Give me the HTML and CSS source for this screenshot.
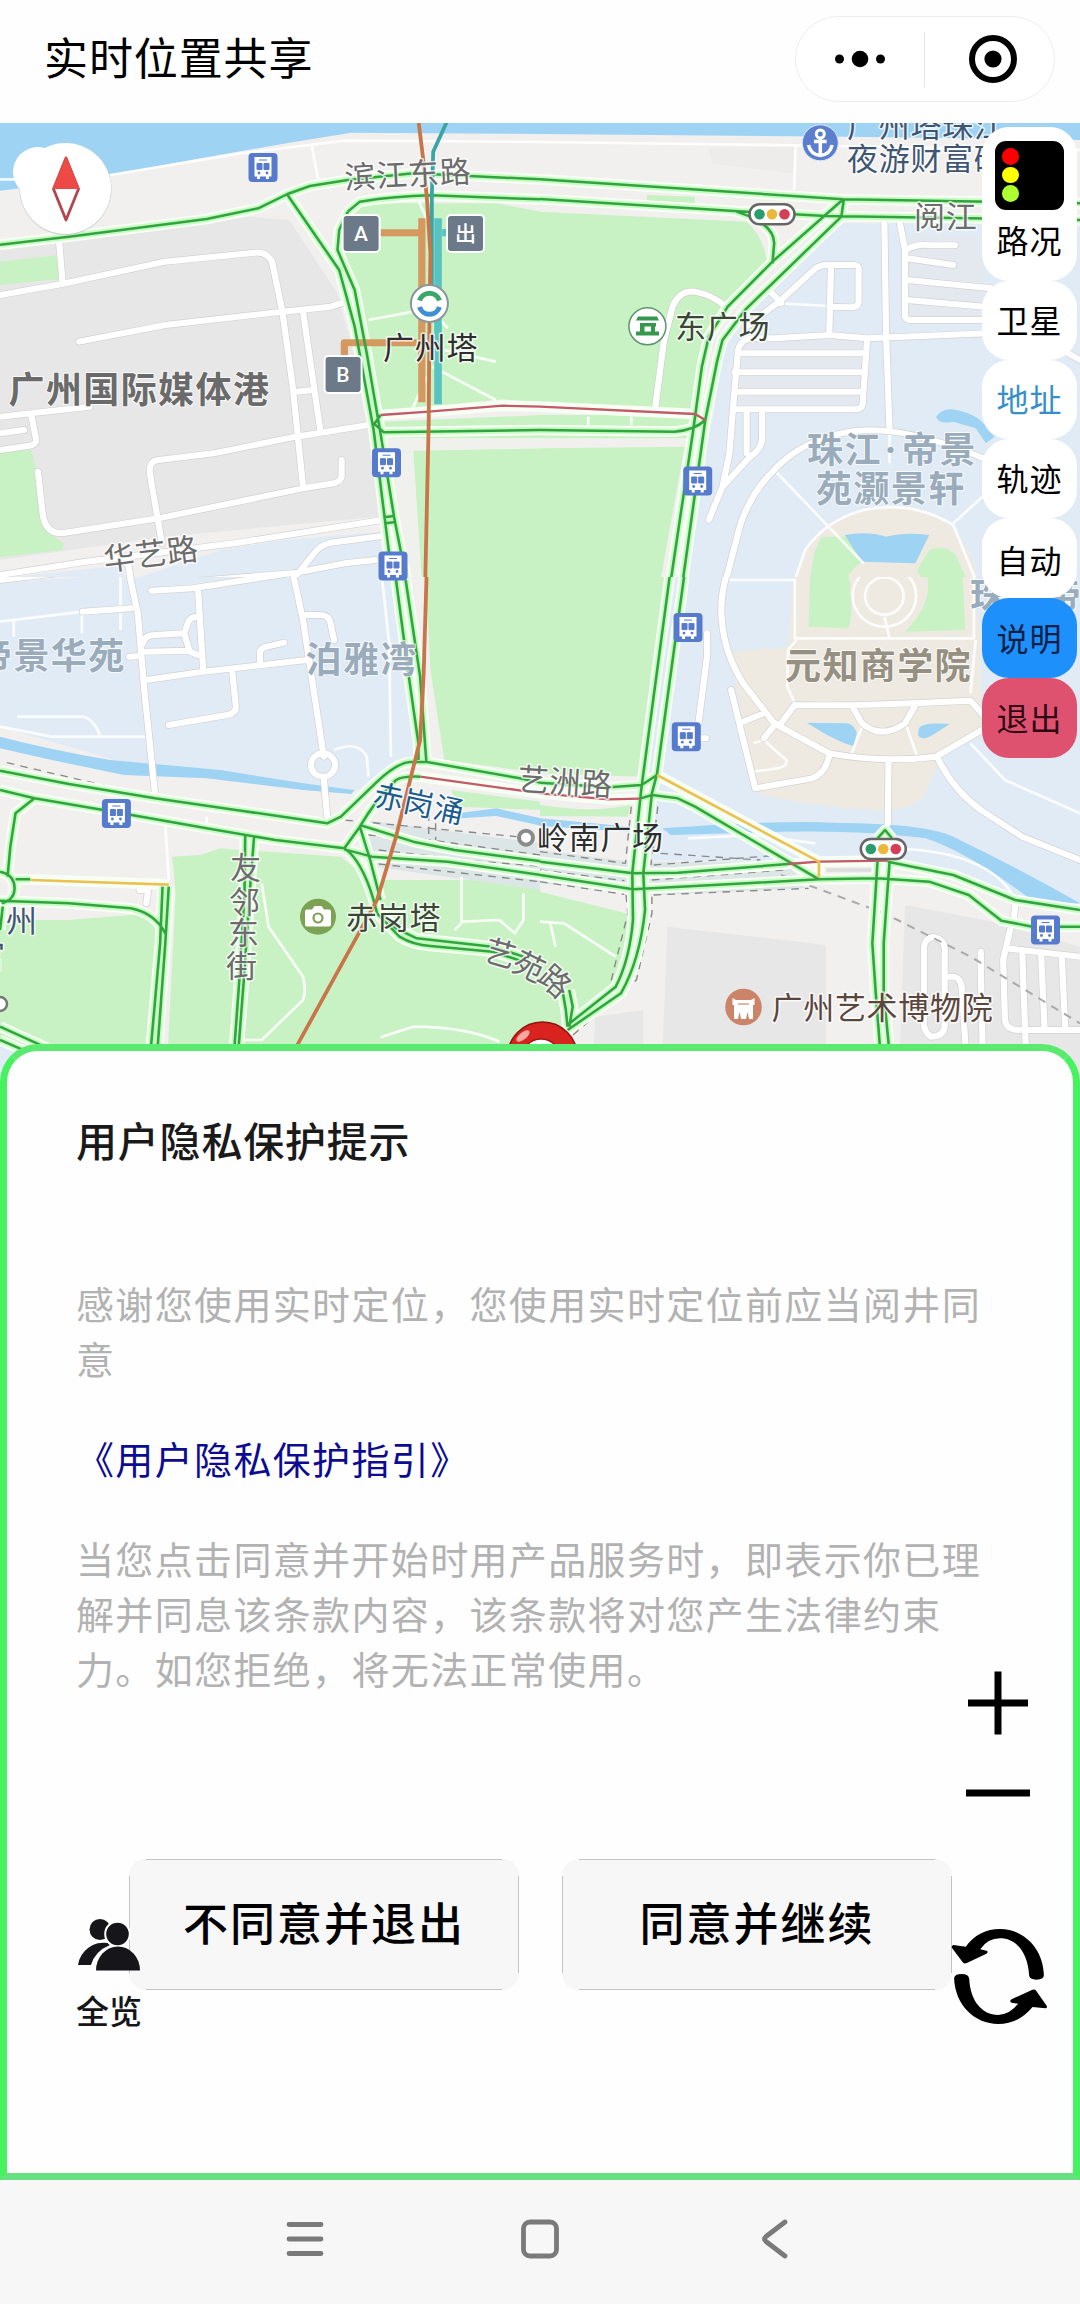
FILE: index.html
```html
<!DOCTYPE html>
<html lang="zh-CN">
<head>
<meta charset="utf-8">
<title>实时位置共享</title>
<link rel="stylesheet" href="styles.css">
</head>
<body>
<div class="phone">
  <header class="topbar">
    <h1 class="topbar-title">实时位置共享</h1>
    <div class="capsule">
      <svg class="capsule-icon" viewBox="0 0 60 60"><circle cx="9.5" cy="30" r="4.5"/><circle cx="30" cy="30" r="8.3"/><circle cx="50.5" cy="30" r="4.5"/></svg>
      <span class="capsule-divider"></span>
      <svg class="capsule-icon" viewBox="0 0 60 60"><circle cx="30" cy="30" r="21" fill="none" stroke="#000" stroke-width="6"/><circle cx="30" cy="30" r="8.6"/></svg>
    </div>
  </header>

  <main class="map">
    <svg class="map-canvas" viewBox="0 123 1080 977" width="1080" height="977">
      <defs>
        <g id="bus">
          <rect x="-14.5" y="-14.5" width="29" height="29" rx="4" fill="#567bcc"/>
          <path d="M-8.500-10.500H8.500V9H6V11.500H3V9H-3V11.500H-6V9H-8.500Z" fill="#fff"/>
          <path d="M-4-7.500H4M-6-4H-1V2H-6ZM1-4H6V2H1Z" fill="#567bcc" stroke="#567bcc" stroke-width="1"/>
          <circle cx="-4" cy="5.500" r="1.400" fill="#567bcc"/><circle cx="4" cy="5.500" r="1.400" fill="#567bcc"/>
        </g>
        <g id="signal">
          <rect x="-22.500" y="-10" width="45" height="20" rx="10" fill="#fff" stroke="#666" stroke-width="2.500"/>
          <circle cx="-12.500" r="5.300" fill="#2a9d6f"/><circle r="5.300" fill="#eab83a"/><circle cx="12.500" r="5.300" fill="#d63d57"/>
        </g>
        <path id="roads-nw" d="M0 525L180 492L480 425L740 398Q775 395 790 425L820 575L850 800L880 1100M172 370L182 490M230 665L480 615L820 575L960 560L1005 545M880 575L930 930M860 815L910 810M0 890L90 880L260 860M90 880L105 960Q105 975 80 978L0 990M0 940L70 930M110 1055L125 1190Q135 1240 180 1240L460 1195L880 1105L970 1090Q995 1082 992 1060V1020M470 1270L435 1060Q432 1022 460 1020L620 1000L860 950L1070 915M0 1365L250 1325L480 1296L680 1270L1110 1200M850 1380L920 1290Q935 1275 960 1268L1110 1248M370 1320L380 1380M480 1390L850 1360L1000 1330L1090 1320"/>
        <path id="roads-ne" d="M1000 310L1005 650L1015 930M1045 310L1060 390V580Q1055 600 1080 600H1300M1060 390Q1100 370 1130 376H1205M1065 415L1200 435M1065 480L1310 505M1065 540L1290 560M665 510L700 550M600 620L700 540L800 445Q815 435 830 435H915Q928 437 925 455V550Q922 562 900 562L840 560M845 440L840 640M620 655H680L840 645L950 655L1300 640M1500 680L1568 720M560 870L575 690Q585 655 620 655M580 700H940M565 757H935M565 815H930M560 868H915Q935 868 937 850L950 655M560 870L550 1000L530 1100L490 1200M600 880V1000M645 880V960Q640 990 610 1010L530 1100M540 1380L580 1220Q610 1120 680 1050Q760 960 900 935Q1050 910 1300 1020M335 860L360 660L385 560Q405 510 450 515Q500 525 540 560"/>
        <path id="roads-sw" d="M0 60L370 15M0 38L300 0M370 15L400 160L420 400L450 700M240 155L380 145M375 290L410 288M440 92L560 85L850 38L880 0M850 38L1000 8L1080 0M850 38L880 180L940 590M940 650L950 770M575 90L590 330M890 165H930Q955 165 960 190L970 240M415 250Q420 225 450 225L535 220L545 190Q550 170 575 170M420 275L545 272L575 285M535 220L550 272M425 360L590 335L890 300M755 310V280Q755 262 775 260L825 248M675 340L685 440Q685 460 660 465L490 495M405 990H430L425 1030M973 615a35 35 0 1 0-70 0a35 35 0 1 0 70 0"/>
        <path id="roads-se" d="M555 0Q520 100 528 180Q535 280 590 370L680 490L840 580Q1000 610 1150 590L1300 500M555 390L625 685L790 655Q830 640 840 585M590 485L650 460M650 535L685 490M740 435Q900 440 1250 422L1300 480M740 435L700 490M910 445L935 490Q990 540 1060 490L1090 435M1012 600L1010 790M1155 595Q1200 690 1280 750L1400 830L1568 900M485 220V290L460 490M470 535H482M1380 1030L1375 1090M1365 1110L1345 1200L1350 1380Q1355 1410 1390 1410H1568M1355 1165L1568 1190M1400 1170L1410 1450M1455 1180L1465 1405M1515 1185L1525 1405M1135 1430Q1110 1410 1115 1380V1160Q1120 1130 1145 1132Q1180 1140 1175 1180V1400Q1170 1430 1135 1430M1180 1250H1200Q1225 1255 1225 1290L1235 1450M1280 1175V1230L1285 1450"/>
        <path id="flow-nw" d="M0 374L200 350L600 297L750 265L835 222L900 198L1010 180L1200 160L1568 178M835 225L985 450L1030 620L1085 930L1130 1300L1140 1380M1010 275L985 330L980 390L1030 510L1065 700L1105 940L1145 1195L1165 1300L1180 1380M1010 275L1045 245Q1150 228 1250 226L1568 238M1085 910L1115 937L1568 930M1085 915L1105 885M1115 1192L1145 1188M1120 1210L1148 1206"/>
        <path id="flow-ne" d="M0 178L880 238L1568 250M0 237L600 275L830 288L1568 300M878 240L675 425L545 560L490 650L470 740L445 930L380 1380M882 240L875 290L600 565L530 660L515 720L480 900L415 1380M570 275Q680 310 680 370L675 430M0 930L390 935Q450 930 480 900"/>
        <path id="flow-sw" d="M0 632L200 672L450 715L700 752L950 790L990 770L1090 670Q1150 610 1190 606L1240 606L1510 655L1571 668M0 690L100 715L300 750L600 805L800 840L1000 865L1045 800Q1090 720 1150 660Q1170 648 1220 650M1000 865Q1050 900 1085 1020L1095 1060M1045 800L1075 900L1105 1020M1045 795L1200 845L1320 870L1571 904M1000 868L1080 890L1300 905L1571 945M1150 60L1190 370L1215 550V600M1178 60L1220 350L1238 605M100 715L45 760L30 860L22 950M0 935Q45 945 42 990Q40 1020 5 1030M0 1022L200 1030L380 1045Q450 1060 480 1120M45 958H88M472 980L465 1150L435 1500M490 980L480 1150L455 1500M712 828L710 1000L695 1260L678 1500M738 828L725 1000L708 1260L690 1500M1095 1060L1160 1130Q1200 1155 1250 1158L1430 1175L1520 1205M1110 1060L1150 1105L1210 1135L1430 1160L1520 1190M0 1400L160 1475M0 1440L90 1480M0 1110L8 1040"/>
        <path id="flow-se" d="M383 0L295 680L268 940L270 1080Q260 1200 220 1280L80 1395M425 0L340 640L325 700L300 940L305 1050Q290 1200 235 1300L80 1410M0 905L270 940L400 938L720 912M1010 905L1200 945L1380 1020L1568 1050M0 945L270 988L600 970L810 958L980 955L1130 965L1245 1005L1340 1082L1430 1100H1568M325 705L400 715L450 740L810 958M0 668L200 682L295 675L340 645M290 716L325 705M980 905L965 1150L975 1300L990 1500M1015 905L998 1150V1300L1017 1500M980 835L1002 810L1022 835M65 1290L75 1350L80 1400M85 1290L95 1340L85 1400"/>
      </defs>

      <!-- north-west -->
      <svg x="0" y="120" width="541" height="460" viewBox="0 0 1571 1380" preserveAspectRatio="none">
        <path class="land" d="M0 0H1571V1380H0Z"/>
        <path class="water" d="M0 0H1571V42L1020 38L840 68L600 112L350 158L60 205L0 212Z"/>
        <path class="block" d="M0 390L720 290L840 300L980 520L1080 900L1100 1190L480 1250L0 1320Z"/>
        <path class="park" d="M0 425L170 405L172 478L0 495ZM0 995L90 990L115 1080L130 1230L185 1270L180 1290L0 1312ZM1040 250L1440 250L1571 275V848L1460 838L1100 875L1030 500L985 390L990 310ZM1110 905L1571 885V955H1110ZM1200 990L1571 985V1380H1225L1200 1200Z"/>
        <path class="homes" d="M380 1380L640 1290L830 1260L1100 1235L1120 1380ZM0 1375L360 1335V1380H0Z"/>
        <path class="verge" d="M1120 955H1571V985L1200 992L1225 1380H1185L1120 1000Z"/>
        <path class="lane" d="M0 178H60M905 75L925 185M320 165L700 100L1000 62L1571 66M1070 600L1200 575M1280 600L1300 625M1255 740L1440 840M1240 770L1200 860M1290 690L1440 725M1215 240L1240 300"/>
        <use href="#roads-nw" class="casing"/><use href="#roads-nw" class="road"/>
        <path class="flow-bed" d="M1105 885L1245 875L1460 857L1571 860"/>
        <use href="#flow-nw" class="flow-bed"/><use href="#flow-nw" class="flow-glow"/>
        <path class="hall" d="M1225 295V847M1105 338H1215M1000 710V668H1210"/>
        <path class="hall-teal" d="M1272 295V853M1284 338H1300"/>
        <use href="#flow-nw" class="flow"/>
        <path class="jam" d="M1105 885L1245 875L1460 857L1571 860"/>
        <path class="metro-teal" d="M1300 0L1258 95L1254 230V550"/>
        <path class="metro" d="M1215 0L1228 110L1240 240L1250 400L1247 600L1245 900L1235 1380"/>
      </svg>

      <!-- north-east -->
      <svg x="540" y="120" width="540" height="460" viewBox="0 0 1568 1380" preserveAspectRatio="none">
        <path class="land" d="M0 0H1568V1380H0Z"/>
        <path class="water" d="M0 0H1568V60L900 50L0 42Z"/>
        <path class="block" d="M490 85L740 80L735 160L500 130Z" opacity=".5"/>
        <path class="park" d="M0 275L600 305Q650 350 660 430L540 550L480 650L440 870L0 848ZM0 885H440V955H0ZM0 985L420 980L350 1380H0ZM310 225L450 230V280L310 270Z"/>
        <path class="homes" d="M880 310H1568V1380H400L500 900L540 650L680 460Z"/>
        <path class="block" d="M585 665L940 660L930 865L565 870ZM1070 340L1290 350V590L1070 595Z" opacity=".45"/>
        <path class="sand" d="M740 1380Q760 1260 860 1200Q1000 1130 1140 1180Q1250 1250 1270 1380Z"/>
        <path class="park" d="M785 1380Q790 1290 820 1250L900 1250L935 1325Q900 1350 890 1380ZM1130 1290Q1180 1270 1210 1310L1240 1380H1110L1095 1350Z"/>
        <path class="water" d="M885 1245Q950 1232 1005 1250Q1060 1235 1130 1245L1090 1330L935 1325ZM1150 890Q1170 860 1210 870Q1280 885 1300 930L1320 950L1295 970L1265 925L1200 905Q1160 915 1150 890Z"/>
        <path class="lane" d="M0 66L740 76L1568 90M742 80L738 210M700 550L840 558M680 1050L940 1330M1200 1210L1285 1130M1200 1215L1265 1380M740 1380L770 1290Q830 1200 940 1170Q1080 1140 1200 1215M140 890V915M265 890V915M1015 930V1030"/>
        <use href="#roads-ne" class="casing"/><use href="#roads-ne" class="road"/>
        <path class="flow-bed" d="M0 860L450 882L480 900"/>
        <use href="#flow-ne" class="flow-bed"/><use href="#flow-ne" class="flow-glow"/><use href="#flow-ne" class="flow"/>
        <path class="jam" d="M0 860L450 882L480 900"/>
      </svg>

      <!-- south-west -->
      <svg x="0" y="577" width="541" height="523" viewBox="0 51 1571 1569" preserveAspectRatio="none">
        <path class="land" d="M0 0H1571V1620H0Z"/>
        <path class="homes" d="M0 70L370 40L850 20L1130 0L1200 330L1215 600L1150 600L1040 690L860 670L400 620L0 500Z"/>
        <path class="park" d="M1232 0H1571V640L1290 600L1250 330ZM500 890L580 885L640 865L700 870L990 890L1050 940L1100 960H1571V1620H480L510 1000ZM0 1080H200L440 1060L470 1120L440 1620H0ZM1310 690L1571 725V750L1330 740Z"/>
        <path class="corridor" d="M1060 780L1571 850V990L1090 920Z"/>
        <path class="homes" d="M0 1440L60 1480V1620H0Z"/>
        <path class="water" d="M0 530Q150 570 320 600L640 630L880 670L1030 690L1020 702L880 690L600 655L360 645L150 600L0 565ZM1330 760L1440 745L1571 775V797L1440 768L1340 775Z"/>
        <path class="lane" d="M0 185L240 155M350 40V210M40 180V230M238 160V220M50 470H240Q270 475 290 525M0 500L150 530H430M1110 60L1130 250L1135 590M970 570Q1040 540 1065 590L1070 650M480 790L490 960M760 970L780 1100L880 1250Q890 1290 880 1320L760 1440H700M1105 1432L1200 1400Q1350 1400 1450 1445M1340 950V1090L1320 1110M1340 1085L1450 1080L1495 1120L1520 1080V1000M600 770V790"/>
        <use href="#roads-sw" class="casing"/><use href="#roads-sw" class="road"/>
        <path class="rail" d="M20 608L450 712L640 748L1000 780L1500 830M1070 825L1250 840L1568 885M1100 870L1400 905L1568 918M1100 912L1568 965M1245 760V830M1265 790V840"/>
        <path class="flow-bed" d="M1220 650L1571 700M88 958L490 973"/>
        <use href="#flow-sw" class="flow-bed"/><use href="#flow-sw" class="flow-glow"/><use href="#flow-sw" class="flow"/>
        <path class="jam" d="M1220 650L1571 700"/>
        <path class="slow" d="M88 960L490 974"/>
        <path class="metro" d="M1240 0L1230 350L1220 540L1150 830L1095 1020L865 1452L840 1500"/>
      </svg>

      <!-- south-east -->
      <svg x="540" y="577" width="540" height="523" viewBox="0 51 1568 1569" preserveAspectRatio="none">
        <path class="homes" d="M0 0H1568V1620H0Z"/>
        <path class="land" d="M0 640H295L270 900L720 905L1010 902L1200 950L1380 1020L1568 1060V1620H0Z"/>
        <path class="park" d="M0 0H385L290 650L0 640ZM0 735Q150 760 262 735L255 770L0 768ZM0 995L250 1060L265 1130L210 1290L70 1400L0 1620Z"/>
        <path class="water" d="M0 775L262 800L258 815L0 798ZM355 805Q700 780 850 788Q1120 790 1200 830Q1400 930 1568 1030H1440Q1250 880 1120 835Q950 810 700 815L380 825Z"/>
        <path class="corridor" d="M0 870L270 905L720 905L770 985L330 1005L0 970Z"/>
        <path class="block" d="M370 1100L830 1155V1620H350ZM1060 1035L1340 1090L1568 1160V1620H1040ZM160 1370L300 1350V1620H150Z"/>
        <path class="sand" d="M740 0H1250L1280 240V500L1160 600L1120 700Q1080 755 990 750L900 745Q660 720 620 690L570 380L560 275L720 262Z"/>
        <path class="park" d="M785 0H880Q905 60 900 90Q910 160 895 205L780 200ZM1110 0H1225L1235 210L1060 215Q1140 130 1125 50Z"/>
        <path class="water" d="M775 488L890 490Q910 490 920 520L910 558Q860 545 775 488ZM1100 505Q1110 485 1190 492L1140 525Q1110 545 1098 525Z"/>
        <path class="lane" d="M540 60H740V235H1260V30M745 240L720 270L718 380L740 430M935 500L905 580M1065 500L1095 590M1000 170L1015 235M620 550L650 540L715 600Q720 620 690 625L620 635M1250 550L1350 660L1568 760M430 835L620 825L800 850M1020 865L1100 870Q1300 890 1370 1000M0 1085L70 1090L220 1190M30 1090L45 1160M1092 108a92 92 0 1 0-184 0a92 92 0 1 0 184 0M1056 108a56 56 0 1 0-112 0a56 56 0 1 0 112 0M1265 240L1250 400"/>
        <use href="#roads-se" class="casing"/><use href="#roads-se" class="road"/>
        <path class="rail" d="M265 740L248 910M342 740L322 915M0 875L248 910M325 960L710 930M250 1005L255 1060L200 1290L110 1360M325 1010L325 1060L280 1260L90 1430M330 1005L780 985M0 930L245 962M0 965L245 1003M350 880L640 900M330 915L700 885"/>
        <path class="rail-far" d="M700 945L1000 1060L1250 1190L1568 1390"/>
        <path class="flow-bed" d="M0 700L200 718L290 716M720 912L810 905L1010 902M340 645L810 905V950"/>
        <path class="pale" d="M832 930H985"/>
        <use href="#flow-se" class="flow-bed"/><use href="#flow-se" class="flow-glow"/><use href="#flow-se" class="flow"/>
        <path class="jam" d="M0 700L200 718L290 716M720 912L810 905L1010 902"/>
        <path class="slow" d="M340 645L810 905V952"/>
      </svg>

      <!-- markers -->
      <use href="#bus" x="263" y="167.500"/><use href="#bus" x="386.500" y="462.700"/><use href="#bus" x="393" y="566"/><use href="#bus" x="697.700" y="481"/><use href="#bus" x="688" y="627.600"/><use href="#bus" x="686.300" y="736.700"/><use href="#bus" x="116.400" y="813.500"/><use href="#bus" x="1045.500" y="930"/>
      <use href="#signal" x="772" y="214.300"/><use href="#signal" x="883.300" y="849"/>
      <g class="exit">
        <rect x="342.600" y="215" width="37" height="37" rx="4"/><rect x="447" y="215" width="37" height="37" rx="4"/><rect x="324.600" y="356" width="37" height="37" rx="4"/>
        <text x="361" y="240.500">A</text><text class="exit-cjk" x="465.500" y="241">出</text><text x="343" y="381.500">B</text>
      </g>
      <g fill="none">
        <circle cx="429.400" cy="303.500" r="18.500" fill="#fff" stroke="#8a969c" stroke-width="2"/>
        <path d="M419.500 300.500a10.500 10.500 0 0 1 20 0" stroke="#3aa66a" stroke-width="5"/>
        <path d="M419.500 307a10.500 10.500 0 0 0 20 0" stroke="#3f8fd2" stroke-width="5"/>
      </g>
      <g>
        <circle cx="820.300" cy="142.800" r="18" fill="#5b7fce" stroke="#dfe8fa" stroke-width="1"/>
        <path d="M820.300 138V154M814 141.500H826.600M808.500 145q2 9.500 11.800 10.500q9.800-1 11.800-10.500" fill="none" stroke="#fff" stroke-width="3.500"/>
        <circle cx="820.300" cy="134" r="4" fill="none" stroke="#fff" stroke-width="3"/>
      </g>
      <g>
        <circle cx="647.400" cy="326.300" r="18.500" fill="#fff" stroke="#5e9470" stroke-width="1.500"/>
        <path d="M638 316.500H657L659 320.500H636ZM640 323H656V326.500H644.500V332H640ZM651 326H655V332H651ZM636 331.500H659V335.500H636Z" fill="#36984f"/>
      </g>
      <g>
        <circle cx="318" cy="916.700" r="18" fill="#7ca354"/>
        <path d="M307 909.500H312L314.500 906H321.500L324 909.500H329Q331 909.500 331 911.500V924.500Q331 926.500 329 926.500H307Q305 926.500 305 924.500V911.500Q305 909.500 307 909.500Z" fill="#fff"/>
        <circle cx="318" cy="918" r="4.500" fill="none" stroke="#7ca354" stroke-width="2.200"/>
      </g>
      <g>
        <circle cx="743.500" cy="1007" r="18.300" fill="#cb8467"/>
        <path d="M732.500 998L736 1000H751L754.500 998V1005H753V1019H749L747.500 1012L746 1019H741L739.500 1012L738 1019H734V1005H732.500Z" fill="#fff"/>
        <path d="M738 1004H749" stroke="#e3b6a4" stroke-width="2"/>
      </g>
      <circle cx="526" cy="837.700" r="7" fill="#fff" stroke="#8b8b8b" stroke-width="4"/>
      <circle cx="0" cy="1004" r="7" fill="#fff" stroke="#777" stroke-width="2.500"/>

      <g class="label street">
        <text transform="rotate(-3 345 187)" x="345" y="189">滨江东路</text>
        <text transform="rotate(-7 105 570)" x="105" y="571">华艺路</text>
        <text x="914" y="228">阅江</text>
        <text transform="rotate(4 518 789)" x="517" y="790">艺洲路</text>
        <text x="230" y="879">友</text><text x="229" y="913">邻</text><text x="228" y="944">东</text><text x="226" y="977">街</text>
        <text transform="translate(501 953) rotate(16)" x="-16" y="12">艺</text>
        <text transform="translate(530 966) rotate(26)" x="-16" y="12">苑</text>
        <text transform="translate(556 981) rotate(42)" x="-16" y="12">路</text>
      </g>
      <g class="label poi">
        <text x="383" y="359">广州塔</text>
        <text class="poi-green" x="675" y="338">东广场</text>
        <text class="poi-green" x="346" y="928.500">赤岗塔</text>
        <text x="537" y="849">岭南广场</text>
        <text class="poi-art" x="771.500" y="1019">广州艺术博物院</text>
        <text class="poi-dock" x="847" y="137">广州塔珠江</text>
        <text class="poi-dock" x="847" y="170">夜游财富码</text>
        <text class="poi-dock" x="6" y="932">州</text>
        <text class="poi-dock" x="-26" y="967">官</text>
        <text class="poi-river" transform="rotate(12 373 808)" x="371" y="805">赤岗涌</text>
      </g>
      <g class="label area">
        <text class="area-media" x="8.500" y="402.500">广州国际媒体港</text>
        <text x="807" y="463">珠江</text><circle cx="890.500" cy="450" r="3" fill="#96a9b9"/><text x="902" y="463">帝景</text>
        <text x="816" y="501.500">苑灏景轩</text>
        <text x="-24" y="668.500">帝景华苑</text>
        <text x="305.500" y="673">泊雅湾</text>
        <text x="970" y="609">珠江帝</text>
        <text class="area-school" x="785" y="678.500">元知商学院</text>
      </g>

      <!-- position pin, mostly behind the sheet -->
      <circle cx="542.500" cy="1057" r="35" fill="#d8231f" stroke="#8e1512" stroke-width="1.500"/>
      <circle cx="541" cy="1059" r="20" fill="#fff" stroke="#9c1814" stroke-width="1.500"/>
      <ellipse cx="523" cy="1036" rx="8" ry="3.500" transform="rotate(-38 523 1036)" fill="#f7a9a2"/>

      <!-- compass -->
      <circle cx="65.500" cy="189" r="46" fill="#c9cccd"/>
      <circle cx="38" cy="172" r="25" fill="#fff"/>
      <circle cx="65.500" cy="188.500" r="45.500" fill="#fff"/>
      <path d="M66 158L78.500 189L66 220L53.500 189Z" fill="#fff" stroke="#b4454c" stroke-width="2.800" stroke-linejoin="round"/>
      <path d="M66 156L79.500 189H52.500Z" fill="#ee4a45"/>
    </svg>

    <nav class="tools">
      <div class="tool tool-traffic">
        <span class="lamp"><i class="red"></i><i class="yellow"></i><i class="green"></i></span>
        <span>路况</span>
      </div>
      <div class="tool">卫星</div>
      <div class="tool tool-active">地址</div>
      <div class="tool">轨迹</div>
      <div class="tool tool-auto">自动</div>
      <div class="tool tool-help">说明</div>
      <div class="tool tool-exit">退出</div>
    </nav>
  </main>

  <section class="sheet">
    <h2 class="sheet-title">用户隐私保护提示</h2>
    <p class="sheet-text">感谢您使用实时定位，您使用实时定位前应当阅井同意</p>
    <a class="sheet-link">《用户隐私保护指引》</a>
    <p class="sheet-text">当您点击同意并开始时用产品服务时，即表示你已理解并同息该条款内容，该条款将对您产生法律约束力。如您拒绝，将无法正常使用。</p>
    <div class="actions">
      <button class="btn">不同意并退出</button>
      <button class="btn">同意并继续</button>
    </div>

    <div class="overview">
      <svg viewBox="0 0 62 53" width="62" height="53">
        <circle cx="22" cy="11.500" r="10.500"/>
        <path d="M0 47A26 26 0 0 1 30 25L32 27Q17 33 13 47Z"/>
        <circle cx="39.500" cy="16" r="12.300" stroke="#fff" stroke-width="2"/>
        <path d="M18 52.500A22 24 0 0 1 62 52.500Z"/>
      </svg>
      <span>全览</span>
    </div>
    <div class="zoom">
      <svg viewBox="0 0 64 64" width="64" height="64"><path d="M32 .500V63.500M2 32H62"/></svg>
      <svg viewBox="0 0 64 8" width="64" height="8"><path d="M0 4H64"/></svg>
    </div>
    <svg class="refresh" viewBox="0 0 279 285" preserveAspectRatio="none">
      <path d="M7 48Q0 50 3 57L33 98Q37 106 46 102L103 74Q110 68 103 65L85 61Q106 28 143 28C190 28 224 72 227 139Q228 152 248 152Q270 152 270 138C268 55 208 0 143 0Q80 0 43 53Z"/>
      <path d="M9 148Q10 135 31 135Q52 135 53 150C56 215 90 258 137 258Q172 256 195 224L176 221Q168 217 176 211L235 183Q243 179 248 186L278 230Q281 237 274 238L237 234Q196 285 137 285C70 285 12 230 9 148Z"/>
    </svg>
  </section>

  <footer class="navbar">
    <svg viewBox="0 0 40 40" width="40" height="40"><path d="M4 5.500H36M4 20H36M4 34.500H36"/></svg>
    <svg viewBox="0 0 40 40" width="40" height="40"><rect x="3.500" y="3" width="33" height="34" rx="6.500"/></svg>
    <svg viewBox="0 0 40 40" width="40" height="40"><path d="M30 3L11 17.500Q8 20 11 22.500L30 37"/></svg>
  </footer>
</div>
</body>
</html>
```
FILE: styles.css
```css
* { box-sizing: border-box; }

body {
  margin: 0;
  background: #fff;
  font-family: "Noto Sans CJK SC", "Noto Sans", sans-serif;
}

.phone {
  width: 1080px;
  height: 2304px;
  display: flex;
  flex-direction: column;
  overflow: hidden;
}

/* top bar */
.topbar {
  flex: none;
  height: 123px;
  padding: 0 25px 5px 44px;
  display: flex;
  align-items: center;
  justify-content: space-between;
  background: #fefefe;
}
.topbar-title {
  margin: 0 0 7px;
  font-size: 44px;
  font-weight: 400;
  line-height: 60px;
  letter-spacing: .9px;
  color: #000;
}
.capsule {
  width: 260px;
  height: 86px;
  padding: 0 31px 0 34px;
  display: flex;
  align-items: center;
  justify-content: space-between;
  border: 1px solid #ededed;
  border-radius: 43px;
  background: #fff;
}
.capsule-icon { width: 60px; height: 60px; }
.capsule-divider { width: 1px; height: 55px; background: #e6e6e6; margin-right: 4px; }

/* map */
.map { flex: none; position: relative; height: 977px; }
.map-canvas { display: block; }
.land { fill: #f2f0ef; }
.verge { fill: #f0f1ed; }
.block { fill: #e8e7e8; }
.park { fill: #c9f2c4; }
.homes { fill: #e1ebf6; }
.sand { fill: #eeeae1; }
.water { fill: #9ed3f3; }
.corridor { fill: #dde6e6; }
.lane, .casing, .road, .flow-bed, .flow-glow, .flow, .jam, .slow, .metro, .metro-teal, .hall, .hall-teal, .rail, .rail-far, .pale {
  fill: none;
  stroke-linejoin: round;
}
.lane { stroke: #fff; stroke-width: 8; stroke-opacity: .85; }
.casing { stroke: #d3d1d2; stroke-width: 22; stroke-linecap: round; }
.road { stroke: #fff; stroke-width: 18; stroke-linecap: round; }
.flow-bed { stroke: #f7fff5; stroke-width: 32; }
.flow-glow { stroke: #c4fbc0; stroke-width: 19; }
.flow { stroke: #31a33f; stroke-width: 7.5; }
.jam { stroke: #c35a68; stroke-width: 7; }
.slow { stroke: #ebc252; stroke-width: 8; }
.pale { stroke: #ddd; stroke-width: 10; }
.metro { stroke: #c87549; stroke-width: 11; }
.metro-teal { stroke: #3ba5a5; stroke-width: 11; }
.hall { stroke: #d59960; stroke-width: 21; }
.hall-teal { stroke: #58c3c0; stroke-width: 22; }
.rail { stroke: #888; stroke-width: 4; stroke-dasharray: 22 18; }
.rail-far { stroke: #aaa; stroke-width: 6; stroke-dasharray: 24 20; }

.exit rect { fill: #6b7988; stroke: #fff; stroke-width: 2; }
.exit text {
  fill: #fff;
  font-family: Roboto, "Noto Sans", sans-serif;
  font-size: 21px;
  font-weight: 500;
  text-anchor: middle;
}
.exit .exit-cjk { font-family: "Noto Sans CJK SC", sans-serif; font-size: 21px; }

.label text { paint-order: stroke; stroke: rgba(255, 255, 255, .75); stroke-width: 3px; stroke-linejoin: round; }
.street { font-size: 31px; letter-spacing: .8px; fill: #6c6c6c; }
.poi { font-size: 31px; letter-spacing: .7px; fill: #2e2e2e; }
.poi-green { fill: #3a4734; }
.poi-art { fill: #5b463d; }
.poi-dock { fill: #3f5673; }
.poi-river { fill: #1b5c8d; font-size: 30px; }
.area { font-size: 36px; font-weight: 700; letter-spacing: 1.4px; fill: #9aacbb; }
.area text { stroke-width: 2px; }
.area .area-media { fill: #6a6a6a; }
.area .area-school { fill: #969082; }

/* tool column over the map */
.tools {
  position: absolute;
  top: 4px;
  left: 982px;
  width: 95px;
  display: flex;
  flex-direction: column;
}
.tool {
  height: 79px;
  padding-bottom: 3px;
  display: flex;
  align-items: center;
  justify-content: center;
  border-radius: 27px;
  background: #fff;
  font-size: 32px;
  line-height: 40px;
  letter-spacing: 1px;
  color: #000;
}
.tool-traffic {
  height: 154px;
  padding: 14px 0 0;
  flex-direction: column;
  justify-content: flex-start;
  gap: 9px;
}
.tool-active { color: #3690c8; }
.tool-auto { height: 80px; padding: 1px 0 0; }
.tool-help { height: 80px; background: #1e90fb; color: #071e45; }
.tool-exit { height: 80px; background: #df526f; color: #2e0814; }
.lamp {
  width: 69px;
  height: 69px;
  padding: 7px 0 0 7px;
  display: flex;
  flex-direction: column;
  gap: 2px;
  border-radius: 11px;
  background: #000;
}
.lamp i { width: 17px; height: 16.500px; border-radius: 50%; }
.red { background: #f00; }
.yellow { background: #ff0; }
.green { background: #adff2f; }

/* privacy sheet */
.sheet {
  flex: none;
  position: relative;
  height: 1136px;
  margin-top: -56px;
  padding: 60px 70px 0 69px;
  border: 7px solid #47f260;
  border-top-color: #5bea70;
  border-bottom-color: #66e080;
  border-radius: 38px 38px 0 0;
  background: #fefefe;
}
.sheet-title {
  margin: 0 0 108px;
  font-size: 41px;
  font-weight: 500;
  line-height: 56px;
  letter-spacing: .8px;
  color: #1a1a1a;
}
.sheet-text {
  width: 920px;
  margin: 0;
  font-size: 38px;
  line-height: 55px;
  letter-spacing: 1.35px;
  color: #b2b2b2;
}
.sheet-link {
  display: block;
  margin: 45px 0 45px;
  font-size: 38px;
  line-height: 55px;
  letter-spacing: 1.35px;
  color: #0c0c92;
}
.actions {
  display: flex;
  gap: 43px;
  margin: 164px 0 0 53px;
}
.btn {
  width: 390px;
  height: 131px;
  padding: 0 0 6px;
  border: 0;
  border-radius: 17px;
  background:
    linear-gradient(#c4c4c4, #c4c4c4) center top / 356px 1px no-repeat,
    linear-gradient(#c4c4c4, #c4c4c4) center bottom / 356px 1px no-repeat,
    linear-gradient(#c4c4c4, #c4c4c4) left center / 1px 97px no-repeat,
    linear-gradient(#c4c4c4, #c4c4c4) right center / 1px 97px no-repeat,
    #f7f7f7;
  font-family: inherit;
  font-size: 45px;
  font-weight: 500;
  letter-spacing: 2px;
  color: #000;
}

.overview {
  position: absolute;
  top: 867px;
  left: 69px;
  display: flex;
  flex-direction: column;
  align-items: center;
  gap: 14px;
  font-size: 33px;
  font-weight: 500;
  line-height: 50px;
  color: #15151a;
  fill: #15151a;
}
.zoom {
  position: absolute;
  top: 620px;
  left: 959px;
  display: flex;
  flex-direction: column;
  gap: 54px;
  stroke: #000;
  stroke-width: 7;
}
.refresh {
  position: absolute;
  top: 878px;
  left: 944px;
  width: 96px;
  height: 95px;
}

/* system navigation */
.navbar {
  flex: 1;
  display: grid;
  grid-template-columns: 40px 40px 40px;
  justify-content: center;
  column-gap: 195px;
  padding-top: 39px;
  background: #f7f7f7;
  fill: none;
  stroke: #7a7a7a;
  stroke-width: 4.800;
  stroke-linecap: round;
}
```
